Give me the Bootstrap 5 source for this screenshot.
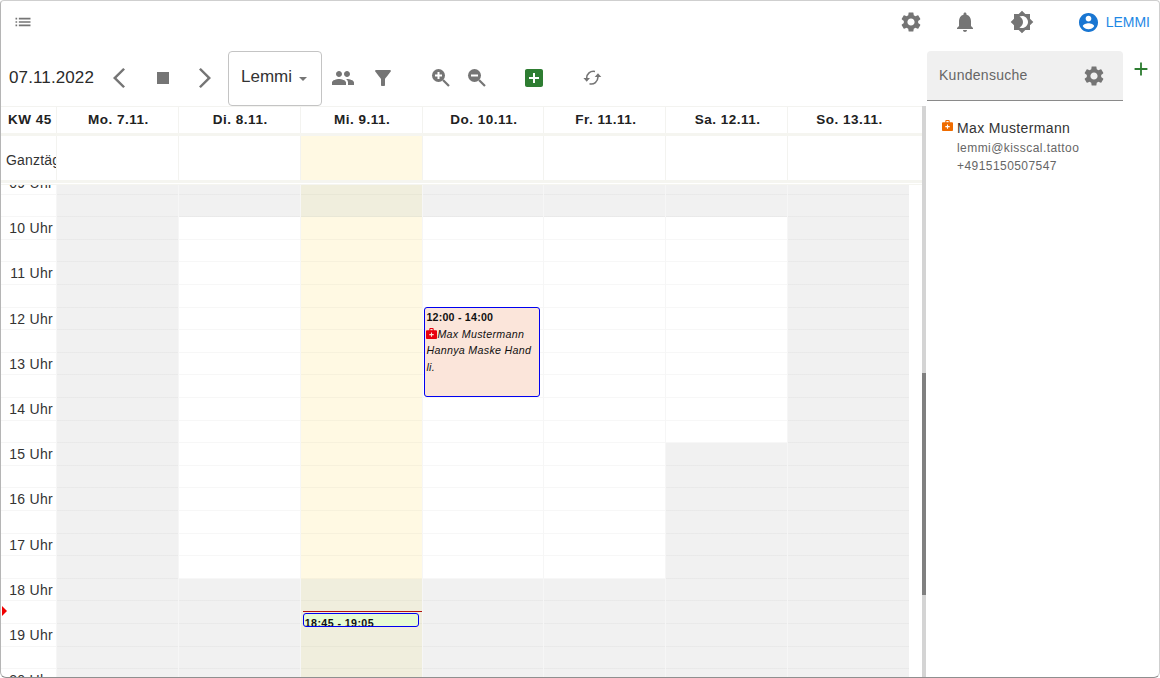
<!DOCTYPE html>
<html lang="de">
<head>
<meta charset="utf-8">
<title>Kalender</title>
<link rel="stylesheet" href="https://cdn.jsdelivr.net/npm/bootstrap@5.3.0/dist/css/bootstrap.min.css">
<style>
html,body{height:100%;margin:0;overflow:hidden;background:#fff}
body{font-family:"Liberation Sans",sans-serif;color:#212121}
.app-frame{width:1160px;height:678px;border:1px solid #cfcfcf;border-left-color:#b5b5b5;border-bottom-color:#8f8f8f;border-radius:4px 4px 6px 6px;overflow:hidden;display:flex;flex-direction:column}
.ico{fill:#757575;display:block;flex:none}
.topbar{height:45px;padding:0 9px 3px 12px;flex:none}
.user-name{color:#1e88e5;font-size:14px}
.main-wrap{flex:1;min-height:0;display:flex}
.cal-pane{width:926px;flex:none;display:flex;flex-direction:column;min-height:0}
.tools{height:60px;flex:none;padding:5px 0 0 8px;display:flex;align-items:center}
.tools>.ico,.date-txt{margin-bottom:2px}
.date-txt{font-size:17px;color:#2a2a2a;width:94px;letter-spacing:.12px}
.sel-box{width:94px;height:55px;border:1px solid #c4c4c4;border-radius:4px;display:flex;align-items:center;padding-left:12px;font-size:17px;color:#333}
.sel-box span{display:block;margin-top:-3px}
.caret-d{width:0;height:0;border:4.500px solid transparent;border-top-color:#757575;border-bottom-width:0;margin:1px 0 0 7px}
.cal-body{flex:1;min-height:0;display:flex}
.cal-main{width:921px;flex:none;display:flex;flex-direction:column;min-height:0}
.head-row{display:grid;grid-template-columns:55px repeat(7,121.85px);height:27px;flex:none;border-top:1px solid #f3f3f0;font-weight:700;font-size:13.5px;color:#212121;letter-spacing:.5px}
.head-row>div{display:flex;align-items:center;justify-content:center;border-left:1px solid #f3f3f0;padding:1px 0 0 2px}
.head-row>div:first-child{border-left:0;padding-left:3px}
.band{height:3px;background:#f5f5f0;flex:none}
.allday-row{display:grid;grid-template-columns:55px repeat(7,121.85px);height:44px;flex:none}
.allday-row>div{border-left:1px solid #f3f3f0}
.allday-row>div:first-child{border-left:0;font-size:14px;color:#333;padding:14px 0 0 5px;overflow:hidden;white-space:nowrap;letter-spacing:.2px}
.band2{height:5px;flex:none;background:linear-gradient(#f5f5f0 0,#f5f5f0 3px,#fff 3px,#fff 4px,#f5f5f0 4px)}
.today-y{background:#fff9e3}
.scroll-wrap{flex:1;min-height:0;overflow:hidden;position:relative}
.grid-body{display:grid;grid-template-columns:55px repeat(7,121.85px);margin-top:-13px;height:520px}
.time-col{background-image:repeating-linear-gradient(to bottom,transparent 0,transparent 21.6px,rgba(0,0,0,.035) 21.6px,rgba(0,0,0,.035) 22.6px)}
.time-col div{height:45.2px;font-size:14px;color:#333;text-align:right;padding:1px 3px 0 0;letter-spacing:.3px}
.day-col{border-left:1px solid #f6f6f6;position:relative;overflow:hidden}
.s-off{background:#f1f1f1}
.s-on{background:#fff}
.s-offy{background:#f0eedd}
.s-ony{background:#fff9e3}
.lines{position:absolute;inset:0;background-image:repeating-linear-gradient(to bottom,transparent 0,transparent 21.6px,rgba(0,0,0,.03) 21.6px,rgba(0,0,0,.03) 22.6px)}
.h-45{height:45.2px}.h-226{height:226px}.h-361{height:361.6px}.h-fill{height:700px}
.ev{position:absolute;border:1px solid #0000f0;border-radius:3px;color:#111;overflow:hidden;font-size:10.7px}
.ev-a{left:1.4px;right:3px;top:135px;height:90px;background:#fbe5da;line-height:16.7px;padding:.5px 1.500px 0}
.ev-a b{display:block;line-height:17px;letter-spacing:.2px}
.ev-a i{letter-spacing:.3px}
.ev-a svg{display:inline-block;vertical-align:-1px;fill:#e8000f}
.ev-b{left:2px;right:3px;top:441px;height:14px;background:#e7fbd5;font-weight:700;letter-spacing:.4px;line-height:19px;padding:0 1px}
.now-line{position:absolute;left:2px;right:0;top:438.5px;height:1px;background:#b01010}
.now-mark{position:absolute;left:1px;top:421px;width:0;height:0;border-left:5px solid #f00000;border-top:5px solid transparent;border-bottom:5px solid transparent}
.sbar{width:4px;background:#d4d4d4;flex:none;position:relative}
.sbar-thumb{position:absolute;left:0;right:0;top:267px;height:222px;background:#808080}
.side{flex:1;min-width:0;display:flex;flex-direction:column;padding-top:5px}
.search-wrap{display:flex}
.search-box{width:196px;height:50px;background:#f0f0f0;border-bottom:1px solid #8a8a8a;border-radius:4px 4px 0 0;display:flex;align-items:center;justify-content:space-between;padding:0 17px 0 12px;font-size:14px;color:#666;letter-spacing:.27px}
.add-btn{margin:7px 0 0 7px}
.cust{padding:18px 0 0 15px;display:flex;gap:4px}
.cust-name{font-size:14px;color:#333;line-height:19px;letter-spacing:.36px}
.cust-sub{font-size:12px;color:#666;line-height:18px;letter-spacing:.44px}
.cust-sub.first-sub{margin-top:1px}
</style>
</head>
<body>
<div class="app-frame">
  <div class="topbar d-flex align-items-center">
    <svg class="ico" width="20" height="20" viewBox="0 0 24 24"><path d="M3 13h2v-2H3v2zm0 4h2v-2H3v2zm0-8h2V7H3v2zm4 4h14v-2H7v2zm0 4h14v-2H7v2zM7 7v2h14V7H7z"/></svg>
    <div class="ms-auto d-flex align-items-center">
      <svg class="ico" width="24" height="24" viewBox="0 0 24 24"><path d="M19.14,12.94c0.04-0.3,0.06-0.61,0.06-0.94c0-0.32-0.02-0.64-0.07-0.94l2.03-1.58c0.18-0.14,0.23-0.41,0.12-0.61 l-1.92-3.32c-0.12-0.22-0.37-0.29-0.59-0.22l-2.39,0.96c-0.5-0.38-1.03-0.7-1.62-0.94L14.4,2.81c-0.04-0.24-0.24-0.41-0.48-0.41 h-3.84c-0.24,0-0.43,0.17-0.47,0.41L9.25,5.35C8.66,5.59,8.12,5.92,7.63,6.29L5.24,5.33c-0.22-0.08-0.47,0-0.59,0.22L2.74,8.87 C2.62,9.08,2.66,9.34,2.86,9.48l2.03,1.58C4.84,11.36,4.8,11.69,4.8,12s0.02,0.64,0.07,0.94l-2.03,1.58 c-0.18,0.14-0.23,0.41-0.12,0.61l1.92,3.32c0.12,0.22,0.37,0.29,0.59,0.22l2.39-0.96c0.5,0.38,1.03,0.7,1.62,0.94l0.36,2.54 c0.05,0.24,0.24,0.41,0.48,0.41h3.84c0.24,0,0.44-0.17,0.47-0.41l0.36-2.54c0.59-0.24,1.13-0.56,1.62-0.94l2.39,0.96 c0.22,0.08,0.47,0,0.59-0.22l1.92-3.32c0.12-0.22,0.07-0.47-0.12-0.61L19.14,12.94z M12,15.6c-1.98,0-3.6-1.62-3.6-3.6 s1.62-3.6,3.6-3.6s3.6,1.62,3.6,3.6S13.98,15.6,12,15.6z"/></svg>
      <svg class="ico" style="margin-left:30px" width="24" height="24" viewBox="0 0 24 24"><path d="M12 22c1.1 0 2-.9 2-2h-4c0 1.1.89 2 2 2zm6-6v-5c0-3.07-1.64-5.64-4.5-6.32V4c0-.83-.67-1.5-1.5-1.5s-1.5.67-1.5 1.5v.68C7.63 5.36 6 7.92 6 11v5l-2 2v1h16v-1l-2-2z"/></svg>
      <svg class="ico" style="margin-left:33px" width="24" height="24" viewBox="0 0 24 24"><path d="M20 8.69V4h-4.69L12 .69 8.69 4H4v4.69L.69 12 4 15.31V20h4.69L12 23.31 15.31 20H20v-4.69L23.31 12 20 8.69zM12 18c-.89 0-1.74-.2-2.5-.55C11.56 16.5 13 14.42 13 12s-1.44-4.5-3.5-5.45C10.26 6.2 11.11 6 12 6c3.31 0 6 2.69 6 6s-2.69 6-6 6z"/></svg>
      <svg class="ico" style="margin-left:45px;fill:#1976d2" width="19" height="19" viewBox="2 2 20 20"><path d="M12 2C6.48 2 2 6.48 2 12s4.48 10 10 10 10-4.48 10-10S17.52 2 12 2zm0 3c1.66 0 3 1.34 3 3s-1.34 3-3 3-3-1.34-3-3 1.34-3 3-3zm0 14.2c-2.5 0-4.71-1.28-6-3.22.03-1.99 4-3.08 6-3.08 1.99 0 5.97 1.09 6 3.08-1.29 1.94-3.5 3.22-6 3.22z"/></svg>
      <span class="user-name ms-2">LEMMI</span>
    </div>
  </div>
  <div class="main-wrap">
    <div class="cal-pane">
      <div class="tools">
        <div class="date-txt">07.11.2022</div>
        <svg class="ico" width="36" height="36" viewBox="0 0 36 36"><path d="M22 9.600 20.200 8 10 18l10.200 10 1.800-1.600L13.500 18z"/></svg>
        <svg class="ico" style="margin-left:12px" width="24" height="24" viewBox="0 0 24 24"><path d="M6 6h12v12H6z"/></svg>
        <svg class="ico" style="margin-left:11px" width="36" height="36" viewBox="0 0 36 36"><path d="M13 9.600 14.800 8 25 18 14.800 28 13 26.400 21.500 18z"/></svg>
        <div class="sel-box" style="margin-left:6px"><span>Lemmi</span><i class="caret-d"></i></div>
        <svg class="ico" style="margin-left:9px" width="24" height="24" viewBox="0 0 24 24"><path d="M16 11c1.660 0 2.990-1.340 2.990-3S17.660 5 16 5c-1.660 0-3 1.340-3 3s1.340 3 3 3zm-8 0c1.660 0 2.990-1.340 2.990-3S9.660 5 8 5C6.340 5 5 6.340 5 8s1.340 3 3 3zm0 2c-2.330 0-7 1.170-7 3.500V19h14v-2.500c0-2.330-4.670-3.500-7-3.500zm8 0c-.29 0-.62.02-.97.05 1.160.84 1.970 1.970 1.970 3.450V19h6v-2.500c0-2.330-4.670-3.500-7-3.500z"/></svg>
        <svg class="ico" style="margin-left:16px" width="24" height="24" viewBox="0 0 24 24"><path d="M4.250 5.610C6.270 8.200 10 13 10 13v6c0 .55.45 1 1 1h2c.55 0 1-.45 1-1v-6s3.720-4.800 5.740-7.390c.51-.66.04-1.610-.79-1.610H5.040c-.83 0-1.300.95-.79 1.610z"/></svg>
        <svg class="ico" style="margin-left:34px" width="24" height="24" viewBox="0 0 24 24"><circle cx="9.500" cy="9.500" r="6.500"/><path d="M14 14l6 6" stroke="#757575" stroke-width="2.200" fill="none"/><path d="M13 10.500H10.500V13h-2v-2.500H6v-2h2.500V6h2v2.500H13z" fill="#fff"/></svg>
        <svg class="ico" style="margin-left:12px" width="24" height="24" viewBox="0 0 24 24"><circle cx="9.500" cy="9.500" r="6.500"/><path d="M14 14l6 6" stroke="#757575" stroke-width="2.200" fill="none"/><path d="M6 8.500h7v2H6z" fill="#fff"/></svg>
        <svg class="ico" style="margin-left:33px;fill:#2e7d32" width="24" height="24" viewBox="0 0 24 24"><path d="M19 3H5c-1.110 0-2 .9-2 2v14c0 1.100.89 2 2 2h14c1.100 0 2-.9 2-2V5c0-1.100-.9-2-2-2zm-2 10h-4v4h-2v-4H7v-2h4V7h2v4h4v2z"/></svg>
        <svg class="ico" style="margin-left:34px" width="24" height="24" viewBox="0 0 24 24"><path d="M6.700 12C6.700 8 10.200 4.500 15 5.500M18 11C17.800 15.500 14 19 9.500 17.800" fill="none" stroke="#757575" stroke-width="1.600"/><path d="M3.400 12h6.600l-3.300 3.700zM14.700 11h6.600L18 7.300z"/></svg>
      </div>
      <div class="cal-body">
        <div class="cal-main">
          <div class="head-row">
            <div>KW 45</div><div>Mo. 7.11.</div><div>Di. 8.11.</div><div>Mi. 9.11.</div><div>Do. 10.11.</div><div>Fr. 11.11.</div><div>Sa. 12.11.</div><div>So. 13.11.</div>
          </div>
          <div class="band"></div>
          <div class="allday-row">
            <div>Ganztägig</div><div></div><div></div><div class="today-y"></div><div></div><div></div><div></div><div></div>
          </div>
          <div class="band2"></div>
          <div class="scroll-wrap">
            <div class="grid-body">
              <div class="time-col">
                <div>09 Uhr</div><div>10 Uhr</div><div>11 Uhr</div><div>12 Uhr</div><div>13 Uhr</div><div>14 Uhr</div><div>15 Uhr</div><div>16 Uhr</div><div>17 Uhr</div><div>18 Uhr</div><div>19 Uhr</div><div>20 Uhr</div>
              </div>
              <div class="day-col"><div class="s-off h-fill"></div><div class="lines"></div></div>
              <div class="day-col"><div class="s-off h-45"></div><div class="s-on h-361"></div><div class="s-off h-fill"></div><div class="lines"></div></div>
              <div class="day-col">
                <div class="s-offy h-45"></div><div class="s-ony h-361"></div><div class="s-offy h-fill"></div><div class="lines"></div>
                <div class="now-line"></div>
                <div class="ev ev-b">18:45 - 19:05</div>
              </div>
              <div class="day-col">
                <div class="s-off h-45"></div><div class="s-on h-361"></div><div class="s-off h-fill"></div><div class="lines"></div>
                <div class="ev ev-a"><b>12:00 - 14:00</b><svg width="11" height="11" viewBox="2 2 20 20"><path d="M20 6h-4V4c0-1.100-.9-2-2-2h-4c-1.100 0-2 .9-2 2v2H4c-1.100 0-2 .9-2 2v12c0 1.100.9 2 2 2h16c1.100 0 2-.9 2-2V8c0-1.100-.9-2-2-2zM10 4h4v2h-4V4zm6 11h-3v3h-2v-3H8v-2h3v-3h2v3h3v2z"/></svg><i>Max Mustermann Hannya Maske Hand li.</i></div>
              </div>
              <div class="day-col"><div class="s-off h-45"></div><div class="s-on h-361"></div><div class="s-off h-fill"></div><div class="lines"></div></div>
              <div class="day-col"><div class="s-off h-45"></div><div class="s-on h-226"></div><div class="s-off h-fill"></div><div class="lines"></div></div>
              <div class="day-col"><div class="s-off h-fill"></div><div class="lines"></div></div>
            </div>
            <div class="now-mark"></div>
          </div>
        </div>
        <div class="sbar"><div class="sbar-thumb"></div></div>
      </div>
    </div>
    <div class="side">
      <div class="search-wrap">
        <div class="search-box"><span>Kundensuche</span>
          <svg class="ico" width="24" height="24" viewBox="0 0 24 24"><path d="M19.14,12.94c0.04-0.3,0.06-0.61,0.06-0.94c0-0.32-0.02-0.64-0.07-0.94l2.03-1.58c0.18-0.14,0.23-0.41,0.12-0.61 l-1.92-3.32c-0.12-0.22-0.37-0.29-0.59-0.22l-2.39,0.96c-0.5-0.38-1.03-0.7-1.62-0.94L14.4,2.81c-0.04-0.24-0.24-0.41-0.48-0.41 h-3.84c-0.24,0-0.43,0.17-0.47,0.41L9.25,5.35C8.66,5.59,8.12,5.92,7.63,6.29L5.24,5.33c-0.22-0.08-0.47,0-0.59,0.22L2.74,8.87 C2.62,9.08,2.66,9.34,2.86,9.48l2.03,1.58C4.84,11.36,4.8,11.69,4.8,12s0.02,0.64,0.07,0.94l-2.03,1.58 c-0.18,0.14-0.23,0.41-0.12,0.61l1.92,3.32c0.12,0.22,0.37,0.29,0.59,0.22l2.39-0.96c0.5,0.38,1.03,0.7,1.62,0.94l0.36,2.54 c0.05,0.24,0.24,0.41,0.48,0.41h3.84c0.24,0,0.44-0.17,0.47-0.41l0.36-2.54c0.59-0.24,1.13-0.56,1.62-0.94l2.39,0.96 c0.22,0.08,0.47,0,0.59-0.22l1.92-3.32c0.12-0.22,0.07-0.47-0.12-0.61L19.14,12.94z M12,15.6c-1.98,0-3.6-1.62-3.6-3.6 s1.62-3.6,3.6-3.6s3.6,1.62,3.6,3.6S13.98,15.6,12,15.6z"/></svg>
        </div>
        <svg class="ico add-btn" style="fill:#2e7d32" width="22" height="22" viewBox="0 0 24 24"><path d="M19 13h-6v6h-2v-6H5v-2h6V5h2v6h6v2z"/></svg>
      </div>
      <div class="cust">
        <svg class="ico" style="fill:#ef6c00;margin-top:1px" width="11" height="11" viewBox="2 2 20 20"><path d="M20 6h-4V4c0-1.100-.9-2-2-2h-4c-1.100 0-2 .9-2 2v2H4c-1.100 0-2 .9-2 2v12c0 1.100.9 2 2 2h16c1.100 0 2-.9 2-2V8c0-1.100-.9-2-2-2zM10 4h4v2h-4V4zm6 11h-3v3h-2v-3H8v-2h3v-3h2v3h3v2z"/></svg>
        <div>
          <div class="cust-name">Max Mustermann</div>
          <div class="cust-sub first-sub">lemmi@kisscal.tattoo</div>
          <div class="cust-sub">+4915150507547</div>
        </div>
      </div>
    </div>
  </div>
</div>
</body>
</html>
